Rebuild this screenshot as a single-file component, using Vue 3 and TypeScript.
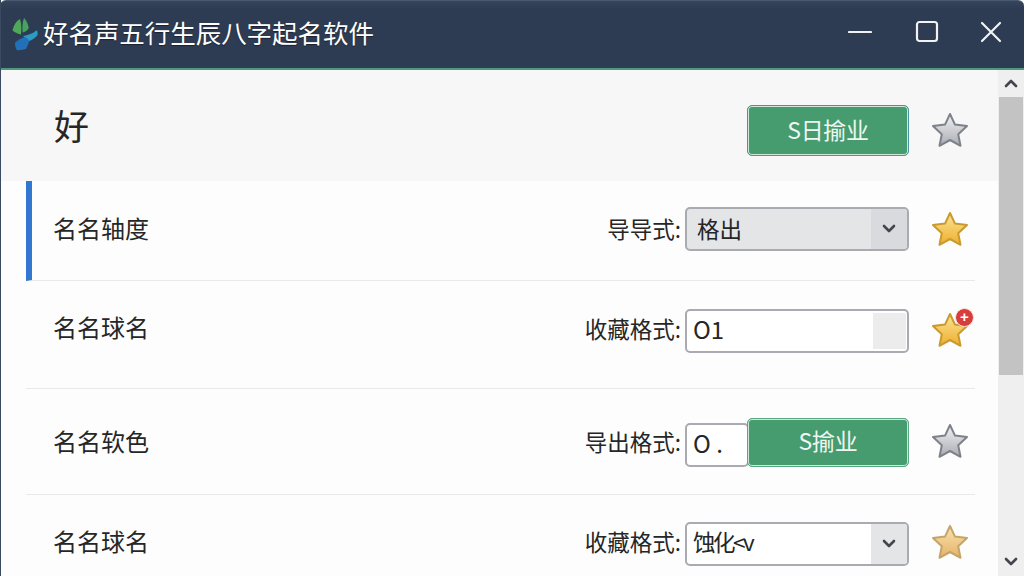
<script setup lang="ts">
type StarKind = 'grey' | 'gold' | 'pale'
type Row = {
  name: string
  label: string
  kind: 'select' | 'input' | 'combo'
  value: string
  star: StarKind
  cls: string
  badge?: boolean
  filled?: boolean
}
const rows: Row[] = [
  { name: '名名轴度', label: '导导式:', kind: 'select', value: '格出', star: 'gold', cls: 'row-a', filled: true },
  { name: '名名球名', label: '收藏格式:', kind: 'input', value: 'O1', star: 'gold', cls: 'row-b', badge: true },
  { name: '名名软色', label: '导出格式:', kind: 'combo', value: 'O .', star: 'grey', cls: 'row-c' },
  { name: '名名球名', label: '收藏格式:', kind: 'select', value: '蚀化<v', star: 'pale', cls: 'row-d' }
]
const starPath = 'M18 1 L23 11.600 L35 13 L26.200 21.200 L28.500 32.800 L18 27 L7.500 32.800 L9.800 21.200 L1 13 L13 11.600 Z'
</script>

<template>
  <div class="win">
    <svg class="defs" width="0" height="0" aria-hidden="true">
      <defs>
        <linearGradient id="star-grey" x1="0" y1="0" x2="0" y2="1">
          <stop offset="0" stop-color="#f2f2f3" />
          <stop offset="1" stop-color="#a9acb3" />
        </linearGradient>
        <linearGradient id="star-gold" x1="0" y1="0" x2="0" y2="1">
          <stop offset="0" stop-color="#fbe596" />
          <stop offset="1" stop-color="#eeae2e" />
        </linearGradient>
        <linearGradient id="star-pale" x1="0" y1="0" x2="0" y2="1">
          <stop offset="0" stop-color="#f8e2b0" />
          <stop offset="1" stop-color="#e6b368" />
        </linearGradient>
      </defs>
    </svg>

    <header class="titlebar">
      <div class="brand">
        <svg class="logo" viewBox="0 0 28 34" width="28" height="34">
          <path d="M9 2 C5 4 2.500 9 1.500 13.500 C4 15.500 7 17 10 17.500 C10.500 12 10.500 7 9 2Z" fill="#4fa85a" />
          <path d="M13 1 C11.500 5 11 10 11.700 15.500 C14 15 16.500 13.500 17.800 11 C17 7 15.500 3.500 13 1Z" fill="#45a35f" />
          <path d="M12 19 C17 18.500 22 16.500 25.500 13.300 C26.800 14.500 27 17 26.300 18.500 C24 21 21 23 17.500 24.500 C16 22.500 14 20.500 12 19Z" fill="#2a9bc4" />
          <path d="M4 25.500 C7 23 10.500 21 14 20 C15.500 21 17 22 18.300 23.500 C17.500 26.500 16.500 29 15 32 C12 33 8.500 33.500 5.700 33 C4.500 31 4 28 4 25.500Z" fill="#2270b8" />
        </svg>
        <span class="title">好名声五行生辰八字起名软件</span>
      </div>
      <div class="controls">
        <svg viewBox="0 0 24 24" width="24" height="24" class="ctl ctl-min"><path d="M1 12 H23" /></svg>
        <svg viewBox="0 0 24 24" width="24" height="24" class="ctl ctl-max"><rect x="2" y="2" width="20" height="19" rx="2.500" /></svg>
        <svg viewBox="0 0 24 24" width="24" height="24" class="ctl ctl-close"><path d="M3 3 L21 21 M21 3 L3 21" /></svg>
      </div>
    </header>

    <div class="body">
      <main class="content">
        <section class="top">
          <h1 class="hao">好</h1>
          <div class="top-right">
            <button class="green green-top" type="button"><span class="btn-text">S日揄业</span></button>
            <svg class="star star-top" viewBox="0 0 36 34" width="36" height="34">
              <path :d="starPath" fill="url(#star-grey)" stroke="#7d8189" stroke-width="2" stroke-linejoin="round" />
            </svg>
          </div>
        </section>

        <section v-for="r in rows" :key="r.cls" class="row" :class="r.cls">
          <span class="name">{{ r.name }}</span>
          <div class="right">
            <span class="label">{{ r.label }}</span>

            <div v-if="r.kind === 'select'" class="field select" :class="{ filled: r.filled }">
              <span class="val">{{ r.value }}</span>
              <span class="arrow">
                <svg viewBox="0 0 14 10" width="14" height="10"><path d="M2 2 L7 7 L12 2" /></svg>
              </span>
            </div>

            <div v-else-if="r.kind === 'input'" class="field">
              <span class="val val-num">{{ r.value }}</span>
              <span class="inner-block"></span>
            </div>

            <div v-else class="combo">
              <div class="field field-short"><span class="val val-num">{{ r.value }}</span></div>
              <button class="green green-row" type="button"><span class="btn-text">S揄业</span></button>
            </div>

            <div class="star-wrap">
              <svg class="star" viewBox="0 0 36 34" width="36" height="34">
                <path
                  :d="starPath"
                  :fill="`url(#star-${r.star})`"
                  :stroke="r.star === 'grey' ? '#7d8189' : r.star === 'gold' ? '#c99a2e' : '#c4a468'"
                  stroke-width="2"
                  stroke-linejoin="round"
                />
              </svg>
              <span v-if="r.badge" class="badge">+</span>
            </div>
          </div>
        </section>
      </main>

      <aside class="scrollbar">
        <span class="sb-btn">
          <svg viewBox="0 0 14 10" width="14" height="10"><path d="M2 7 L7 2 L12 7" /></svg>
        </span>
        <span class="thumb"></span>
        <span class="track"></span>
        <span class="sb-btn sb-bottom">
          <svg viewBox="0 0 14 10" width="14" height="10"><path d="M2 2 L7 7 L12 2" /></svg>
        </span>
      </aside>
    </div>
  </div>
</template>

<style>
html,
body {
  margin: 0;
  background: #2b3950;
  overflow: hidden;
}
</style>

<style scoped>
.win {
  width: 1024px;
  height: 576px;
  display: flex;
  flex-direction: column;
  overflow: hidden;
  box-sizing: border-box;
  border-left: 1px solid #3a4a60;
  font-family: "Noto Sans CJK SC", "Noto Sans", sans-serif;
  color: #262626;
  background: #fdfdfd;
}
.defs {
  position: absolute;
}
.titlebar {
  flex: 0 0 67px;
  margin-left: -1px;
  display: flex;
  align-items: center;
  justify-content: space-between;
  padding: 0 21px 0 11px;
  background: linear-gradient(#36445c, #2d3b53 12%, #2d3c54);
  border-top: 1px solid #4a5a70;
  border-radius: 6px 6px 0 0;
  border-bottom: 2px solid #4f9a7c;
  box-sizing: content-box;
  height: 64px;
}
.brand {
  display: flex;
  align-items: center;
  gap: 4px;
}
.logo {
  margin-bottom: 2px;
}
.title {
  color: #fff;
  font-size: 25.500px;
  letter-spacing: -0.050px;
  line-height: 34px;
  margin-bottom: 5px;
  white-space: nowrap;
  text-shadow: 0 1px 1px rgba(0, 0, 0, 0.45);
}
.controls {
  display: flex;
  align-items: center;
  gap: 40px;
  margin-bottom: 5px;
}
.ctl {
  fill: none;
  stroke: #f0f2f4;
  stroke-width: 2.200;
  stroke-linecap: round;
}
.ctl-min {
  margin-right: 3px;
}
.body {
  flex: 1;
  min-height: 0;
  display: flex;
}
.content {
  width: 997px;
  display: flex;
  flex-direction: column;
  overflow: hidden;
}
.top {
  flex: 0 0 111px;
  box-sizing: border-box;
  display: flex;
  justify-content: space-between;
  align-items: flex-start;
  padding: 35px 30px 0 53px;
  background: #f7f7f7;
}
.hao {
  margin: -2px 0 0;
  font-size: 35px;
  font-weight: 400;
  line-height: 44px;
}
.top-right {
  display: flex;
  align-items: center;
  gap: 23px;
}
.star-top {
  margin-top: -1px;
}
.green {
  font-family: inherit;
  color: #eef7f1;
  background: #479c6f;
  font-size: 23px;
  padding: 0;
  box-sizing: border-box;
  width: 162px;
  border-radius: 5px;
  box-shadow: inset 0 0 0 1px #cfe6d8;
}
.btn-text {
  display: block;
  margin-top: -4px;
  letter-spacing: -0.300px;
}
.green-top {
  height: 51px;
  border: 1px solid #4b93a0;
}
.green-row {
  height: 49px;
  border: 1px solid #5aa883;
  margin-left: -2px;
  position: relative;
}
.row {
  flex: none;
  margin-left: 25px;
  width: 949px;
  box-sizing: border-box;
  display: flex;
  justify-content: space-between;
  align-items: center;
  padding: 0 8px 0 27px;
  border-bottom: 1px solid #e9e9e7;
}
.row-a {
  height: 100px;
  border-left: 6px solid #3277d0;
  padding-left: 21px;
  padding-bottom: 4px;
}
.row-b {
  height: 108px;
  padding-bottom: 8px;
}
.row-c {
  height: 106px;
  padding-top: 1px;
}
.row-d {
  height: 82px;
  border-bottom: 0;
  padding-top: 16px;
  flex-shrink: 0;
}
.name {
  font-size: 24px;
  line-height: 44px;
  padding-bottom: 3px;
  white-space: nowrap;
}
.row-a .name,
.row-a .label {
  padding-bottom: 1px;
}
.row-b .name {
  padding-bottom: 7px;
}
.row-b .label {
  padding-bottom: 5px;
}
.row-d .name,
.row-d .label {
  padding-bottom: 7px;
}
.right {
  display: flex;
  align-items: center;
}
.label {
  font-size: 22.500px;
  line-height: 44px;
  padding-bottom: 3px;
  white-space: nowrap;
  margin-right: 4px;
}
.field {
  width: 224px;
  height: 44px;
  box-sizing: border-box;
  display: flex;
  align-items: center;
  justify-content: space-between;
  background: #fff;
  border: 2px solid #a9abb1;
  border-radius: 5px;
  overflow: hidden;
}
.val {
  padding: 0 0 3px 10px;
  font-size: 22.500px;
  line-height: 36px;
  white-space: nowrap;
}
.row-a .val {
  padding-bottom: 1px;
}
.val-num {
  padding-left: 6px;
  font-size: 24px;
}
.row-d .val {
  padding: 0 0 6px 6px;
  letter-spacing: -2.500px;
}
.select .arrow {
  align-self: stretch;
  width: 36px;
  display: flex;
  align-items: center;
  justify-content: center;
  background: #e4e5e7;
}
.select .arrow svg,
.sb-btn svg {
  fill: none;
  stroke: #45454f;
  stroke-width: 2.600;
  stroke-linecap: round;
  stroke-linejoin: round;
}
.filled {
  background: #e4e5e7;
}
.filled .arrow {
  background: #d9dadd;
}
.inner-block {
  width: 33px;
  height: 36px;
  margin-right: 1px;
  background: #ececec;
}
.combo {
  display: flex;
  align-items: flex-end;
  width: 224px;
  height: 49px;
}
.field-short {
  width: 64px;
}
.star-wrap {
  position: relative;
  margin: -2px -1px 0 23px;
  width: 36px;
  height: 34px;
}
.row-a .star-wrap {
  margin-top: 0;
}
.row-d .star-wrap {
  margin-top: -4px;
}
.star {
  display: block;
  overflow: visible;
}
.badge {
  position: absolute;
  top: -5px;
  right: -6px;
  width: 19px;
  height: 19px;
  border-radius: 50%;
  background: #d83c3c;
  border: 1px solid #f4e5d4;
  box-sizing: border-box;
  color: #fff;
  font: 700 15px/16px "Liberation Sans", sans-serif;
  text-align: center;
}
.scrollbar {
  width: 26px;
  display: flex;
  flex-direction: column;
  align-items: stretch;
  background: #efefef;
}
.sb-btn {
  flex: 0 0 27px;
  display: flex;
  align-items: center;
  justify-content: center;
}
.thumb {
  flex: 0 0 278px;
  margin: 0 1px;
  background: #c3c3c3;
}
.track {
  flex: 1;
}
.sb-bottom {
  flex-basis: 28px;
}
</style>
